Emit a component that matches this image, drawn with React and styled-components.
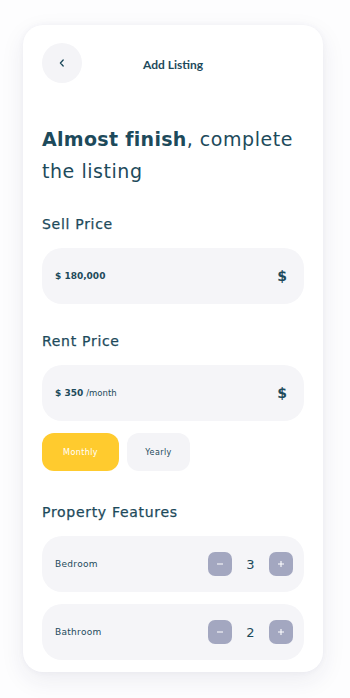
import React, { useState } from 'react';
import styled, { createGlobalStyle } from 'styled-components';

const Global = createGlobalStyle`
  html, body { margin: 0; padding: 0; background: #ffffff; }
  * { box-sizing: border-box; }
`;

const ink = '#1d4a5b';

const Page = styled.div`
  width: 350px;
  height: 698px;
  padding: 25px 0 0 23px;
  background: #fdfdfe;
`;

const Card = styled.div`
  width: 300px;
  height: 647px;
  background: #ffffff;
  border-radius: 20px;
  box-shadow: 0 8px 24px rgba(40, 40, 90, 0.08), 0 0 6px rgba(40, 40, 90, 0.04);
  padding: 18px 19px 0 19px;
  overflow: hidden;
  display: flex;
  flex-direction: column;
`;

const Header = styled.div`
  display: flex;
  align-items: center;
  height: 40px;
`;

const BackButton = styled.button`
  width: 40px;
  height: 40px;
  border-radius: 50%;
  border: none;
  background: #f4f4f7;
  display: flex;
  align-items: center;
  justify-content: center;
  padding: 0;
  color: ${ink};
`;

const Title = styled.div`
  flex: 1;
  text-align: center;
  margin-right: 40px;
  padding-top: 2px;
  font-family: Lato, 'Liberation Sans', sans-serif;
  font-weight: 700;
  font-size: 12px;
  color: ${ink};
`;

const Heading = styled.h1`
  margin: 40px 0 0 0;
  font-family: 'DejaVu Sans', sans-serif;
  font-weight: 400;
  font-size: 19px;
  line-height: 32px;
  color: ${ink};
  letter-spacing: 0.55px;
  b { font-weight: 700; letter-spacing: 0.3px; }
`;

const Label = styled.div`
  margin-top: ${p => p.$top}px;
  font-family: 'DejaVu Sans', sans-serif;
  font-size: 14px;
  line-height: 18px;
  font-weight: 400;
  letter-spacing: 0.7px;
  -webkit-text-stroke: 0.25px ${ink};
  color: ${ink};
`;

const Field = styled.div`
  margin-top: 15px;
  height: 56px;
  border-radius: 20px;
  background: #f5f5f8;
  display: flex;
  align-items: center;
  justify-content: space-between;
  padding: 0 17px 0 13px;
`;

const Value = styled.div`
  font-family: 'DejaVu Sans', sans-serif;
  font-size: 9px;
  font-weight: 700;
  color: ${ink};
  span { font-weight: 400; font-size: 8.5px; margin-left: 3px; }
`;

const Dollar = styled.div`
  font-family: 'DejaVu Sans', sans-serif;
  font-weight: 700;
  font-size: 14px;
  color: ${ink};
`;

const Toggle = styled.div`
  margin-top: 12px;
  display: flex;
  gap: 8px;
`;

const Chip = styled.button`
  width: ${p => p.$w}px;
  height: 38px;
  border-radius: 12px;
  border: none;
  padding: 0;
  background: ${p => (p.$active ? '#ffcb2e' : '#f4f4f7')};
  color: ${p => (p.$active ? '#ffffff' : ink)};
  font-family: 'DejaVu Sans', sans-serif;
  font-size: 8px;
  letter-spacing: 0.4px;
`;

const Row = styled.div`
  margin-top: ${p => p.$top}px;
  height: 56px;
  border-radius: 20px;
  background: #f5f5f8;
  display: flex;
  align-items: center;
  padding: 0 11px 0 13px;
`;

const RowLabel = styled.div`
  flex: 1;
  font-family: 'DejaVu Sans', sans-serif;
  font-size: 9px;
  letter-spacing: 0.3px;
  color: ${ink};
`;

const Step = styled.button`
  width: 24px;
  height: 24px;
  border-radius: 7px;
  border: none;
  padding: 0;
  background: #a3a7c0;
  color: #ffffff;
  display: flex;
  align-items: center;
  justify-content: center;
`;

const Count = styled.div`
  width: 37px;
  text-align: center;
  font-family: 'DejaVu Sans', sans-serif;
  font-size: 13px;
  color: ${ink};
`;

const Minus = () => (
  <svg width="8" height="8" viewBox="0 0 8 8"><path d="M1 4h6" stroke="#fff" strokeWidth="1.2" /></svg>
);
const Plus = () => (
  <svg width="8" height="8" viewBox="0 0 8 8"><path d="M1 4h6M4 1v6" stroke="#fff" strokeWidth="1.1" /></svg>
);

function Counter({ label, start, top }) {
  const [n, setN] = useState(start);
  return (
    <Row $top={top}>
      <RowLabel>{label}</RowLabel>
      <Step onClick={() => setN(Math.max(0, n - 1))}><Minus /></Step>
      <Count>{n}</Count>
      <Step onClick={() => setN(n + 1)}><Plus /></Step>
    </Row>
  );
}

export default function App() {
  const [period, setPeriod] = useState('monthly');
  return (
    <Page>
      <Global />
      <Card>
        <Header>
          <BackButton>
            <svg width="10" height="10" viewBox="0 0 10 10">
              <path d="M6.2 2 3.4 5l2.8 3" fill="none" stroke={ink} strokeWidth="1.3" strokeLinecap="round" strokeLinejoin="round" />
            </svg>
          </BackButton>
          <Title>Add Listing</Title>
        </Header>
        <Heading><b>Almost finish</b>, complete the listing</Heading>
        <Label $top={28}>Sell Price</Label>
        <Field>
          <Value>$ 180,000</Value>
          <Dollar>$</Dollar>
        </Field>
        <Label $top={28}>Rent Price</Label>
        <Field>
          <Value>$ 350<span>/month</span></Value>
          <Dollar>$</Dollar>
        </Field>
        <Toggle>
          <Chip $w={77} $active={period === 'monthly'} onClick={() => setPeriod('monthly')}>Monthly</Chip>
          <Chip $w={63} $active={period === 'yearly'} onClick={() => setPeriod('yearly')}>Yearly</Chip>
        </Toggle>
        <Label $top={32}>Property Features</Label>
        <Counter label="Bedroom" start={3} top={15} />
        <Counter label="Bathroom" start={2} top={12} />
      </Card>
    </Page>
  );
}
